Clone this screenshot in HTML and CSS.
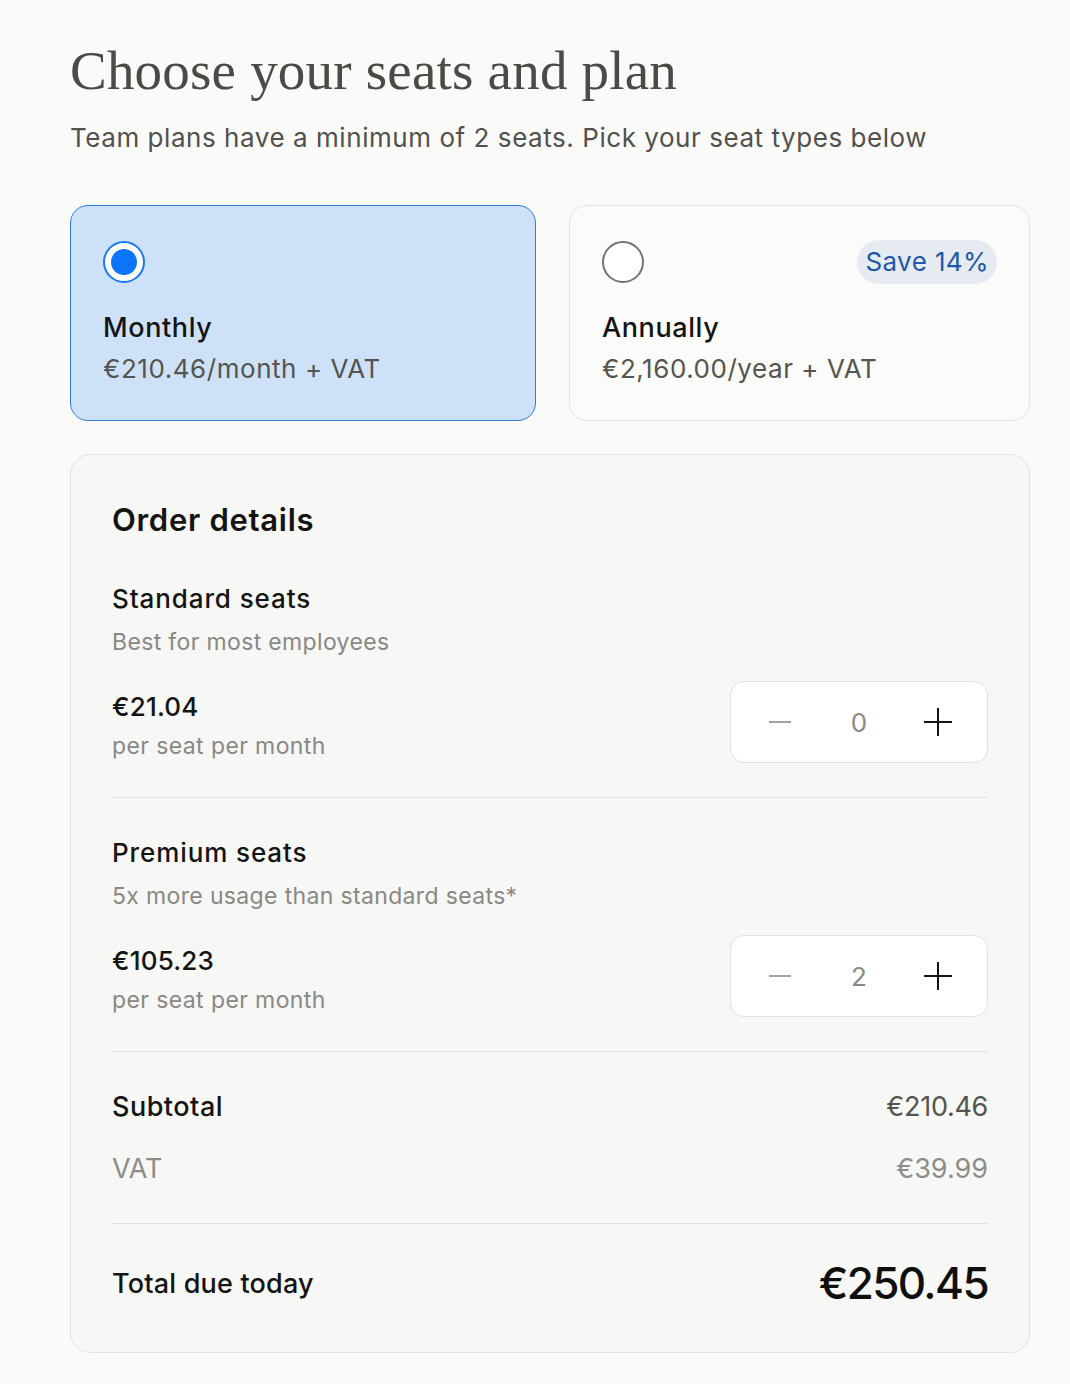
FILE: index.html
```html
<!DOCTYPE html>
<html lang="en">
<head>
<meta charset="utf-8">
<title>Choose your seats and plan</title>
<link rel="stylesheet" href="styles.css">
</head>
<body>
<main class="page">
  <h1 class="title">Choose your seats and plan</h1>
  <p class="subtitle">Team plans have a minimum of 2 seats. Pick your seat types below</p>

  <div class="plans">
    <label class="plan plan--selected">
      <div class="plan-top">
        <span class="radio radio--on"><span class="radio-dot"></span></span>
      </div>
      <div class="plan-name">Monthly</div>
      <div class="plan-price">€210.46/month + VAT</div>
    </label>
    <label class="plan">
      <div class="plan-top">
        <span class="radio"></span>
        <span class="badge">Save 14%</span>
      </div>
      <div class="plan-name">Annually</div>
      <div class="plan-price">€2,160.00/year + VAT</div>
    </label>
  </div>

  <section class="order">
    <h2 class="order-title">Order details</h2>

    <div class="seat">
      <div class="seat-name">Standard seats</div>
      <div class="seat-desc">Best for most employees</div>
      <div class="seat-row">
        <div class="seat-price">
          <div class="price">€21.04</div>
          <div class="per">per seat per month</div>
        </div>
        <div class="stepper">
          <span class="step step--minus"><span class="bar-h"></span></span>
          <span class="count">0</span>
          <span class="step step--plus"><span class="bar-h"></span><span class="bar-v"></span></span>
        </div>
      </div>
    </div>

    <div class="seat">
      <div class="seat-name">Premium seats</div>
      <div class="seat-desc">5x more usage than standard seats*</div>
      <div class="seat-row">
        <div class="seat-price">
          <div class="price">€105.23</div>
          <div class="per">per seat per month</div>
        </div>
        <div class="stepper">
          <span class="step step--minus"><span class="bar-h"></span></span>
          <span class="count">2</span>
          <span class="step step--plus"><span class="bar-h"></span><span class="bar-v"></span></span>
        </div>
      </div>
    </div>

    <div class="totals">
      <div class="line line--sub"><span>Subtotal</span><span class="amt">€210.46</span></div>
      <div class="line line--vat"><span>VAT</span><span>€39.99</span></div>
    </div>

    <div class="grand">
      <span class="grand-label">Total due today</span>
      <span class="grand-amt">€250.45</span>
    </div>
  </section>
</main>
</body>
</html>
```

FILE: styles.css
```css
* { box-sizing: border-box; }

html, body {
  margin: 0;
  padding: 0;
  background: #fafaf8;
}

body {
  font-family: Inter, "Noto Sans", sans-serif;
  color: #141413;
}

.page {
  width: 960px;
  margin-left: 70px;
  padding-top: 41px;
  padding-bottom: 30px;
}

.title {
  margin: 0;
  font-family: "Liberation Serif", "DejaVu Serif", serif;
  font-weight: 400;
  font-size: 55px;
  line-height: 60px;
  color: #4b4a46;
  letter-spacing: 0.2px;
}

.subtitle {
  margin: 20px 0 0;
  font-size: 26px;
  line-height: 34px;
  color: #52514d;
  letter-spacing: 0.55px;
}

.plans {
  margin-top: 50px;
  display: grid;
  grid-template-columns: 466px 1fr;
  gap: 33px;
}

.plan {
  display: block;
  border: 1px solid #e4e4e1;
  border-radius: 18px;
  background: #fbfbf9;
  padding: 34px 32px 32px;
  height: 216px;
}

.plan--selected {
  background: #cde2f8;
  border-color: #2c7be0;
}

.plan-top {
  display: flex;
  justify-content: space-between;
  align-items: center;
  height: 44px;
}

.radio {
  width: 42px;
  height: 42px;
  border-radius: 50%;
  border: 2px solid #737373;
  background: #fff;
  display: flex;
  align-items: center;
  justify-content: center;
}

.radio--on {
  border-color: #1a78f0;
}

.radio-dot {
  width: 26px;
  height: 26px;
  border-radius: 50%;
  background: #0b74fa;
}

.badge {
  height: 44px;
  padding: 0 8px;
  border-radius: 22px;
  background: #e6ebf2;
  color: #1e58a8;
  font-size: 26px;
  line-height: 44px;
  letter-spacing: 0.4px;
}

.plan-name {
  margin-top: 24px;
  font-size: 27px;
  line-height: 40px;
  font-weight: 500;
  color: #141413;
  letter-spacing: 0.6px;
}

.plan-price {
  margin-top: 1px;
  font-size: 26px;
  line-height: 40px;
  color: #55544f;
  letter-spacing: 0.55px;
}

.order {
  margin-top: 33px;
  border: 1px solid #e3e3e0;
  border-radius: 20px;
  background: #f7f7f5;
  padding: 45px 41px 42px;
}

.order-title {
  margin: 0;
  font-size: 31px;
  line-height: 40px;
  font-weight: 600;
  color: #141413;
  letter-spacing: 0.7px;
}

.seat {
  padding: 41px 0 34px;
  border-bottom: 1px solid #e2e2df;
}

.seat + .seat {
  padding-top: 37px;
}

.seat-name {
  font-size: 26px;
  line-height: 36px;
  font-weight: 500;
  letter-spacing: 0.9px;
}

.seat-desc {
  margin-top: 9px;
  font-size: 23px;
  line-height: 32px;
  color: #898884;
  letter-spacing: 0.35px;
}

.seat-row {
  margin-top: 23px;
  display: flex;
  justify-content: space-between;
  align-items: center;
}

.seat-price {
  padding-top: 8px;
}

.price {
  font-size: 26px;
  line-height: 34px;
  font-weight: 500;
  color: #141413;
  letter-spacing: 0.2px;
}

.per {
  margin-top: 6px;
  font-size: 23px;
  line-height: 32px;
  color: #898884;
  letter-spacing: 0.4px;
}

.stepper {
  width: 258px;
  height: 82px;
  background: #fff;
  border: 1px solid #e1e1de;
  border-radius: 14px;
  display: grid;
  grid-template-columns: 1fr 1fr 1fr;
  align-items: center;
  justify-items: center;
  padding: 0 10px;
}

.step {
  position: relative;
  width: 28px;
  height: 28px;
  display: block;
}

.bar-h, .bar-v {
  position: absolute;
  background: #141413;
}

.bar-h {
  left: 0;
  right: 0;
  top: 13px;
  height: 2px;
}

.bar-v {
  top: 0;
  bottom: 0;
  left: 13px;
  width: 2px;
}

.step--minus .bar-h {
  left: 3px;
  right: 3px;
  background: #a3a3a0;
}

.count {
  font-size: 26px;
  color: #8a8986;
}

.totals {
  padding: 37px 0 36px;
  border-bottom: 1px solid #e2e2df;
}

.line {
  display: flex;
  justify-content: space-between;
  font-size: 27px;
  line-height: 36px;
}

.line--sub span:first-child {
  font-weight: 500;
  color: #141413;
  letter-spacing: 0.5px;
}

.line--sub .amt {
  color: #55544f;
  letter-spacing: -0.3px;
}

.line--vat {
  margin-top: 26px;
  color: #8d8c88;
}

.grand {
  padding-top: 33px;
  display: flex;
  justify-content: space-between;
  align-items: center;
}

.grand-label {
  font-size: 27px;
  font-weight: 500;
  line-height: 36px;
  letter-spacing: 0.2px;
}

.grand-amt {
  font-size: 44px;
  line-height: 53px;
  font-weight: 500;
  color: #0f0f0e;
  letter-spacing: -1.6px;
}
```
